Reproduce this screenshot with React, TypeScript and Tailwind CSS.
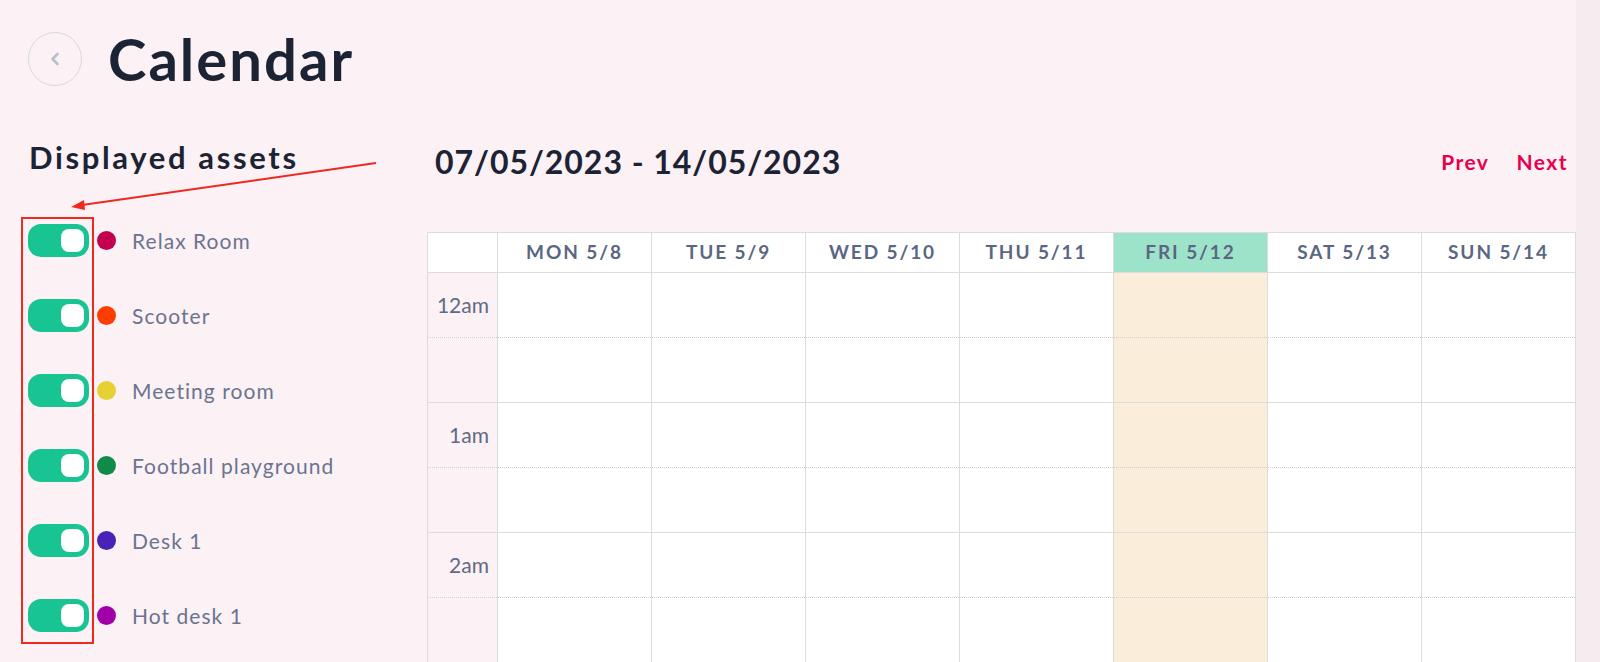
import { ChevronLeft } from "lucide-react";

const assets = [
  { name: "Relax Room", color: "bg-[#c2004e]" },
  { name: "Scooter", color: "bg-[#ff3d00]" },
  { name: "Meeting room", color: "bg-[#e6d033]" },
  { name: "Football playground", color: "bg-[#0f8a47]" },
  { name: "Desk 1", color: "bg-[#4b22b8]" },
  { name: "Hot desk 1", color: "bg-[#a100a9]" },
];

const days = ["MON 5/8", "TUE 5/9", "WED 5/10", "THU 5/11", "FRI 5/12", "SAT 5/13", "SUN 5/14"];
// last row is only partly visible at the bottom edge
const hours = ["12am", "1am", "2am", ""];
const today = 4;

function Toggle() {
  return (
    <div className="flex h-[33px] w-[61px] shrink-0 items-center justify-end rounded-[13px] bg-[#17c492] pr-[5px]">
      <div className="h-[23px] w-[23px] rounded-[8px] bg-white" />
    </div>
  );
}

export default function App() {
  return (
    <div className="relative flex h-[662px] w-[1600px] overflow-hidden bg-[#fcf1f5] font-['Lato',sans-serif]">
      <div className="flex w-[1576px] shrink-0 flex-col">
        <div className="mt-[24px] flex h-[70px] items-center pl-[28px]">
          <button className="flex h-[54px] w-[54px] items-center justify-center rounded-full border border-[#d6dadf]">
            <ChevronLeft size={20} strokeWidth={3.25} className="text-[#b9c1c8]" />
          </button>
          <h1 className="ml-[26px] text-[58px] font-bold leading-[70px] tracking-[0.035em] text-[#1b2334]">Calendar</h1>
        </div>

        <div className="flex flex-1">
          <div className="w-[427px] shrink-0 pl-[28px]">
            <h2 className="mt-[45px] pl-[1px] text-[31px] font-bold leading-[36px] tracking-[0.085em] text-[#1b2334]">
              Displayed assets
            </h2>
            <div className="mt-[49px] flex flex-col gap-[42px]">
              {assets.map((a) => (
                <div key={a.name} className="flex items-center">
                  <Toggle />
                  <span className={`ml-[8px] h-[19px] w-[19px] shrink-0 rounded-full ${a.color}`} />
                  <span className="ml-[16px] text-[21px] tracking-[0.05em] text-[#6a7490]">{a.name}</span>
                </div>
              ))}
            </div>
          </div>

          <div className="flex min-w-0 flex-1 flex-col">
            <div className="mt-[49px] flex h-[38px] items-center justify-between px-[8px]">
              <h2 className="text-[32px] font-bold leading-[38px] tracking-[0.03em] text-[#1b2334]">
                07/05/2023 - 14/05/2023
              </h2>
              <div className="flex gap-[27px] text-[21px] font-bold tracking-[0.07em] text-[#e8004e]">
                <span>Prev</span>
                <span>Next</span>
              </div>
            </div>

            <div className="mt-[51px] grid grid-cols-[70px_repeat(7,1fr)] border-l border-t border-[#dcdcdc]">
              <div className="h-[40px] border-b border-r border-[#dcdcdc] bg-white" />
              {days.map((d, i) => (
                <div
                  key={d}
                  className={`flex h-[40px] items-center justify-center border-b border-r border-[#dcdcdc] text-[19px] font-bold tracking-[0.1em] text-[#5b6782] ${
                    i === today ? "bg-[#9de3ca]" : "bg-white"
                  }`}
                >
                  {d}
                </div>
              ))}

              {hours.map((h, r) => (
                <div key={r} className="contents">
                  <div className="border-b border-r border-[#dcdcdc]">
                    <div className="flex h-[65px] items-center justify-end border-b border-dotted border-[#cfcfcf] pr-[8px] text-[21px] text-[#5f6a85]">
                      {h}
                    </div>
                    <div className="h-[64px]" />
                  </div>
                  {days.map((d, i) => (
                    <div
                      key={d}
                      className={`border-b border-r border-[#dcdcdc] ${i === today ? "bg-[#faedd9]" : "bg-white"}`}
                    >
                      <div className="h-[65px] border-b border-dotted border-[#cfcfcf]" />
                      <div className="h-[64px]" />
                    </div>
                  ))}
                </div>
              ))}
            </div>
          </div>
        </div>
      </div>
      <div className="w-[24px] bg-[#f6ecf0]" />

      {/* annotation overlay */}
      <div className="absolute left-[21px] top-[217px] h-[427px] w-[73px] border-2 border-[#ee2a1e]" />
      <svg className="absolute left-0 top-0" width="400" height="230" viewBox="0 0 400 230">
        <line x1="376" y1="163" x2="82" y2="205" stroke="#ee2a1e" strokeWidth="2" />
        <polygon points="71,207 84,200 85,210" fill="#ee2a1e" />
      </svg>
    </div>
  );
}
